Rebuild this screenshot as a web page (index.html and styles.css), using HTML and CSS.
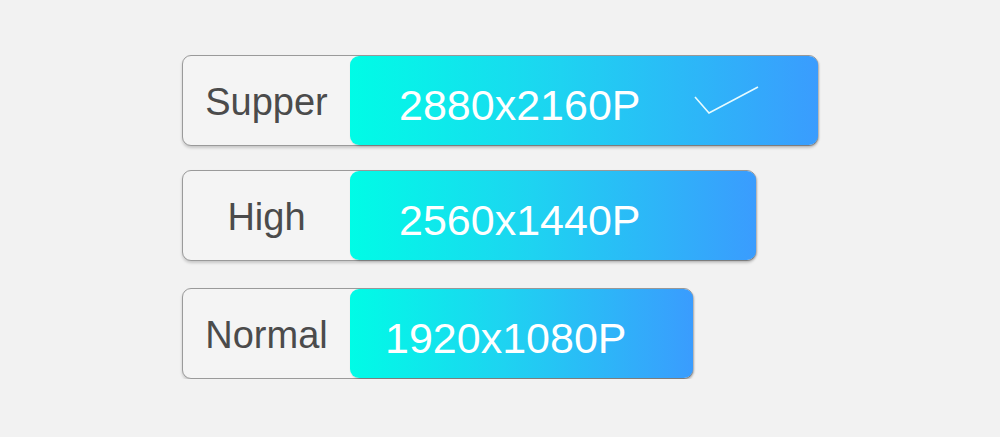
FILE: index.html
```html
<!DOCTYPE html>
<html lang="en">
<head>
    <meta charset="UTF-8">
    <meta name="viewport" content="width=device-width, initial-scale=1.0">
    <title>Resolution</title>
    <link rel="stylesheet" href="styles.css">
</head>
<body>
    <section class="quality-list">
        <div class="quality-row row-supper">
            <div class="quality-label">Supper</div>
            <div class="quality-res">
                <span class="res-text">2880x2160P</span>
                <svg class="check" width="70" height="34" viewBox="0 0 70 34">
                    <polyline points="2,11 16,27 65,1" fill="none" stroke="#e6fbff" stroke-width="1.6"/>
                </svg>
            </div>
        </div>
        <div class="quality-row row-high">
            <div class="quality-label">High</div>
            <div class="quality-res">
                <span class="res-text">2560x1440P</span>
            </div>
        </div>
        <div class="quality-row row-normal">
            <div class="quality-label">Normal</div>
            <div class="quality-res">
                <span class="res-text">1920x1080P</span>
            </div>
        </div>
    </section>
</body>
</html>
```

FILE: styles.css
```css
/* General body styling */
body {
    font-family: "Liberation Sans", Arial, sans-serif;
    margin: 0;
    padding: 0;
    background-color: #f2f2f2;
}

/* List container */
.quality-list {
    padding: 55px 0 0 182px;
    display: flex;
    flex-direction: column;
    align-items: flex-start;
}

/* One row: grey label box with gradient part on the right */
.quality-row {
    display: flex;
    height: 89px;
    border: 1px solid #9a9a9a;
    border-radius: 9px;
    background-color: #f4f4f4;
    box-shadow: 0px 2px 3px rgba(0, 0, 0, 0.18);
}

.row-supper {
    width: 634px;
}

.row-high {
    width: 572px;
    margin-top: 24px;
}

.row-normal {
    width: 509px;
    margin-top: 27px;
}

.quality-label {
    width: 167px;
    flex-shrink: 0;
    display: flex;
    align-items: center;
    justify-content: center;
    font-size: 38px;
    color: #4b4b4b;
    padding-top: 4px;
}

.quality-res {
    flex: 1;
    display: flex;
    align-items: center;
    padding-left: 49px;
    border-radius: 9px;
    margin-right: -1px;
    background: linear-gradient(to right, #00fce6 0%, #1ed3f1 45%, #3a9cfe 100%);
    box-shadow: 1px 1px 2px rgba(0, 0, 0, 0.25);
}

.row-normal .quality-res {
    padding-left: 35px;
}

.res-text {
    font-size: 43px;
    color: #ffffff;
    padding-top: 10px;
}

.check {
    margin-left: 52px;
    margin-top: 4px;
}
```
